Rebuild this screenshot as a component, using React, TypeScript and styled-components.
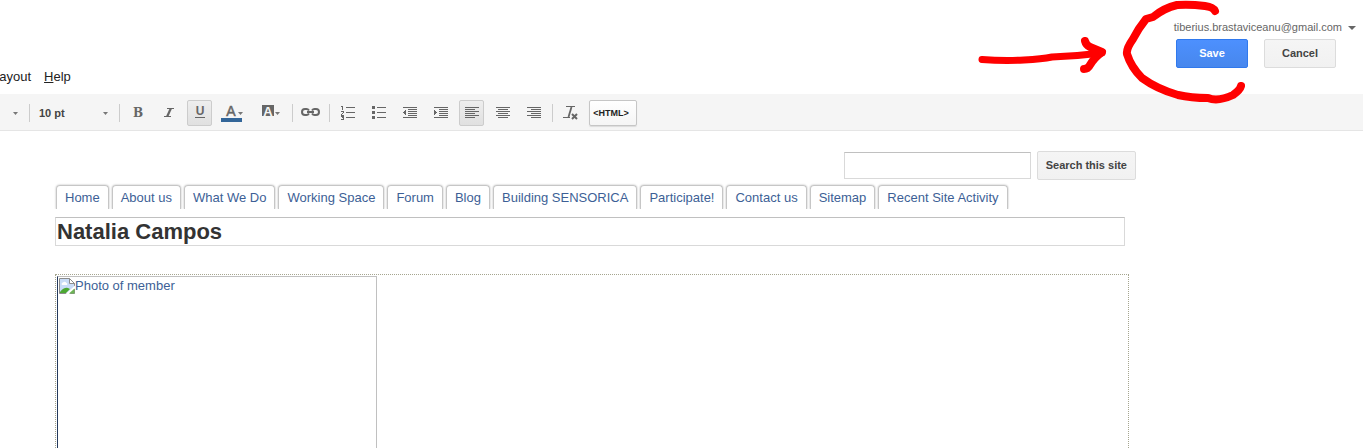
import React from "react";
import styled, { createGlobalStyle, css } from "styled-components";

const GlobalStyle = createGlobalStyle`
  *, *::before, *::after { box-sizing: border-box; }
  body {
    margin: 0;
    background: #fff;
    color: #222;
    font-family: "Liberation Sans", Arial, sans-serif;
    font-size: 13px;
  }
  button, input, select { font-family: inherit; margin: 0; }
`;

const Page = styled.div`
  position: relative;
  display: flex;
  flex-direction: column;
  height: 100vh;
  overflow: hidden;
`;

const Header = styled.header`
  display: flex;
  justify-content: space-between;
  padding-bottom: 8px;
`;

const MenuBar = styled.nav`
  display: flex;
  align-items: flex-end;
  gap: 13px;
  margin-left: -8px;
`;

const MenuItem = styled.a`
  color: #222;
  font-size: 13px;
  line-height: 19px;
  text-decoration: none;
`;

const Account = styled.div`
  display: flex;
  flex-direction: column;
  align-items: flex-end;
  gap: 4px;
  padding: 20px 7px 18px 0;
`;

const AccountButton = styled.button`
  display: flex;
  align-items: center;
  gap: 6px;
  padding: 0;
  border: 0;
  background: none;
  color: #666;
  font-size: 11px;
  line-height: 15px;
`;

const Actions = styled.div`
  display: flex;
  gap: 16px;
  margin-right: 20px;
`;

const ActionButton = styled.button<{ $primary?: boolean }>`
  min-width: 72px;
  height: 29px;
  padding: 0 8px;
  border: 1px solid #dcdcdc;
  border-radius: 2px;
  background: linear-gradient(#f5f5f5, #f1f1f1);
  color: #444;
  font-size: 11px;
  font-weight: bold;
  line-height: 27px;
  white-space: nowrap;
  ${(p) =>
    p.$primary &&
    css`
      border-color: #3079ed;
      background: linear-gradient(#4d90fe, #4787ed);
      color: #fff;
    `}
`;

const Toolbar = styled.div`
  display: flex;
  align-items: center;
  gap: 6px;
  flex: none;
  height: 37px;
  padding-top: 2px;
  border-bottom: 1px solid #e5e5e5;
  background: #f5f5f5;
`;

const Divider = styled.span`
  width: 1px;
  height: 18px;
  margin-right: -1px;
  background: #ccc;
`;

const ToolButton = styled.button<{ $wide?: boolean; $active?: boolean }>`
  display: flex;
  align-items: center;
  justify-content: center;
  width: ${(p) => (p.$wide ? 31 : 25)}px;
  height: 26px;
  padding: 0;
  border: 1px solid ${(p) => (p.$active ? "#ccc" : "transparent")};
  border-radius: 2px;
  background: ${(p) => (p.$active ? "linear-gradient(#eee, #e0e0e0)" : "none")};
  color: #666;
`;

const FontButton = styled.button`
  display: flex;
  align-items: center;
  justify-content: flex-end;
  width: 23px;
  height: 26px;
  padding: 0 5px;
  border: 0;
  background: none;
`;

const SizeField = styled.label`
  display: flex;
  align-items: center;
  width: 78px;
  padding: 0 5px 0 4px;
`;

const SizeSelect = styled.select`
  flex: 1;
  min-width: 0;
  padding: 0;
  border: 0;
  appearance: none;
  background: none;
  color: #444;
  font-size: 11px;
  font-weight: bold;
  line-height: 15px;
`;

const HtmlButton = styled.button`
  width: 48px;
  height: 26px;
  padding: 0 4px 0 0;
  border: 1px solid #c6c6c6;
  border-radius: 2px;
  background: linear-gradient(#fff, #f5f5f5);
  box-shadow: 0 1px 1px rgba(0, 0, 0, 0.1);
  color: #222;
  font-size: 9px;
  font-weight: bold;
`;

const Icon = styled.svg`
  display: block;
  flex: none;
`;

const Site = styled.main`
  display: flex;
  flex-direction: column;
  flex: 1;
  min-height: 0;
  margin: 20px 227px 0 55px;
`;

const Search = styled.form`
  display: flex;
  align-items: center;
  justify-content: flex-end;
  gap: 6px;
`;

const field = css`
  border: 1px solid #d9d9d9;
  border-top-color: #c0c0c0;
  border-radius: 0;
  background: #fff;
  outline: none;
`;

const SearchInput = styled.input`
  ${field}
  width: 187px;
  height: 27px;
  padding: 0 8px;
  font-size: 13px;
`;

const Tabs = styled.nav`
  display: flex;
  gap: 3px;
  margin: 5px 0 0 1px;
`;

const Tab = styled.a`
  height: 24px;
  padding: 0 8px;
  border: solid #c6c6c6;
  border-width: 1px 1px 0;
  border-radius: 4px 4px 0 0;
  box-shadow: 0 0 2px #aaa;
  clip-path: inset(-2px -2px 0);
  color: #3d5f96;
  font-size: 13px;
  line-height: 23px;
  text-decoration: none;
  white-space: nowrap;
`;

const TitleInput = styled.input`
  ${field}
  height: 29px;
  margin: 8px 11px 0 0;
  padding: 0 1px;
  color: #333;
  font-size: 22px;
  font-weight: bold;
`;

const Editor = styled.section`
  flex: 1;
  min-height: 0;
  margin: 28px 7px 0 0;
  padding: 1px;
  border: 1px dotted #a5a58f;
  border-bottom: 0;
  overflow: hidden;
`;

const Photo = styled.a`
  display: flex;
  align-items: flex-start;
  width: 320px;
  height: 240px;
  padding: 1px;
  border: 1px solid #c0c0c0;
  border-left-color: #23395c;
  color: #3d5f96;
  font-size: 13px;
  line-height: 16px;
  text-decoration: none;
`;

const Annotation = styled.svg`
  position: absolute;
  top: 0;
  right: 0;
  pointer-events: none;
`;

const Caret = ({ w = 5, h = 3, fill = "#777" }) => (
  <Icon width={w} height={h} viewBox={`0 0 ${w} ${h}`} aria-hidden="true">
    <path d={`M0 0H${w}L${w / 2} ${h}Z`} fill={fill} />
  </Icon>
);

/* Rows of [x, y, width], each one pixel high. */
const Lines = ({ rows, children }: { rows: number[][]; children?: React.ReactNode }) => (
  <Icon width="17" height="14" viewBox="-2 0 17 14" fill="#666" shapeRendering="crispEdges" aria-hidden="true">
    {rows.map(([x, y, w]) => (
      <rect key={y} x={x} y={y} width={w} height="1" />
    ))}
    {children}
  </Icon>
);

const glyph = { fill: "#666", fontWeight: "bold" as const, textAnchor: "middle" as const };

const listRows = [[5, 1, 9], [5, 6, 9], [5, 11, 9]];
const indentRows = [[0, 1, 14], [5, 3, 9], [5, 5, 9], [5, 7, 9], [5, 9, 9], [0, 11, 14]];
const alignRows = (short: number) => [
  [0, 1, 14], [short, 3, 10], [0, 5, 14], [short, 7, 10], [0, 9, 14], [short, 11, 10],
];

const tabs = [
  "Home", "About us", "What We Do", "Working Space", "Forum", "Blog",
  "Building SENSORICA", "Participate!", "Contact us", "Sitemap", "Recent Site Activity",
];

export default function App() {
  return (
    <Page>
      <GlobalStyle />
      <Header>
        <MenuBar>
          <MenuItem href="#layout">Layout</MenuItem>
          <MenuItem href="#help"><u>H</u>elp</MenuItem>
        </MenuBar>
        <Account>
          <AccountButton>
            tiberius.brastaviceanu@gmail.com
            <Caret w={8} h={4} fill="#666" />
          </AccountButton>
          <Actions>
            <ActionButton $primary>Save</ActionButton>
            <ActionButton>Cancel</ActionButton>
          </Actions>
        </Account>
      </Header>

      <Toolbar role="toolbar" aria-label="Formatting">
        <FontButton aria-label="Font"><Caret /></FontButton>
        <Divider />
        <SizeField>
          <SizeSelect aria-label="Font size" defaultValue="10 pt">
            <option>10 pt</option>
          </SizeSelect>
          <Caret />
        </SizeField>
        <Divider />
        <ToolButton aria-label="Bold">
          <Icon width="15" height="14" viewBox="0 0 15 14">
            <text x="8" y="11" fontFamily="'DejaVu Serif', serif" fontSize="12" {...glyph}>B</text>
          </Icon>
        </ToolButton>
        <ToolButton aria-label="Italic">
          <Icon width="15" height="14" viewBox="0 0 15 14" fill="none" stroke="#666">
            <path d="M6 2.500h7M3 10.500h7" />
            <path d="M9.800 2.500L6.200 10.500" strokeWidth="2.200" />
          </Icon>
        </ToolButton>
        <ToolButton aria-label="Underline" $active>
          <Icon width="15" height="14" viewBox="0 0 15 14">
            <text x="8" y="9" fontFamily="'Liberation Sans', sans-serif" fontSize="12" {...glyph}>U</text>
            <rect x="3" y="11" width="10" height="1" fill="#666" />
          </Icon>
        </ToolButton>
        <ToolButton aria-label="Text color" $wide>
          <Icon width="25" height="18" viewBox="0 0 25 18">
            <text x="10" y="12" fontFamily="'Liberation Sans', sans-serif" fontSize="14" {...glyph} fontWeight="normal" stroke="#666" strokeWidth=".5">A</text>
            <path d="M17 8h5l-2.500 3z" fill="#777" />
            <rect x="0" y="14" width="21" height="4" fill="#336699" />
          </Icon>
        </ToolButton>
        <ToolButton aria-label="Highlight color" $wide>
          <Icon width="21" height="18" viewBox="-2 0 21 18">
            <rect x="0" y="1" width="12" height="11" fill="#666" />
            <text x="6" y="12" fontFamily="'Liberation Sans', sans-serif" fontSize="13" {...glyph} fill="#f5f5f5">A</text>
            <path d="M13 8h5l-2.500 3z" fill="#777" />
          </Icon>
        </ToolButton>
        <Divider />
        <ToolButton aria-label="Link">
          <Icon width="19" height="12" viewBox="0 0 19 12" fill="none" stroke="#666" strokeWidth="2">
            <path d="M8 3.500Q7 2 5.500 2H4a3 3 0 0 0 0 6h1.500Q7 8 8 6.500M11 3.500Q12 2 13.500 2H15a3 3 0 0 1 0 6h-1.500Q12 8 11 6.500M6 5h7" />
          </Icon>
        </ToolButton>
        <Divider />
        <ToolButton aria-label="Numbered list">
          <Lines rows={listRows}>
            <path d="M0 0h2v4h-1v-3h-1zM0 5h3v2h-1v1h-1v1h2v1h-3v-2h1v-1h1v-1h-2zM0 10h3v4h-3v-1h2v-1h-1v-1h-1z" />
          </Lines>
        </ToolButton>
        <ToolButton aria-label="Bulleted list">
          <Lines rows={listRows}>
            <path d="M0 0h3v3h-3zM0 5h3v3h-3zM0 10h3v3h-3z" />
          </Lines>
        </ToolButton>
        <ToolButton aria-label="Decrease indent">
          <Lines rows={indentRows}><path d="M3 4v5h-1v-1h-1v-1h-1v-1h1v-1h1v-1z" /></Lines>
        </ToolButton>
        <ToolButton aria-label="Increase indent">
          <Lines rows={indentRows}><path d="M0 4v5h1v-1h1v-1h1v-1h-1v-1h-1v-1z" /></Lines>
        </ToolButton>
        <ToolButton aria-label="Align left" $active><Lines rows={alignRows(0)} /></ToolButton>
        <ToolButton aria-label="Align center"><Lines rows={alignRows(2)} /></ToolButton>
        <ToolButton aria-label="Align right"><Lines rows={alignRows(4)} /></ToolButton>
        <Divider />
        <ToolButton aria-label="Remove formatting">
          <Icon width="17" height="14" viewBox="-1 0 17 14" fill="none" stroke="#666">
            <path d="M3 .500h9M0 11.500h7" />
            <path d="M8.500 1l-3 10" strokeWidth="1.800" />
            <path d="M9 8l5 5M14 8l-5 5" strokeWidth="2" />
          </Icon>
        </ToolButton>
        <HtmlButton>&lt;HTML&gt;</HtmlButton>
      </Toolbar>

      <Site>
        <Search onSubmit={(e) => e.preventDefault()}>
          <SearchInput type="text" aria-label="Search this site" />
          <ActionButton type="submit">Search this site</ActionButton>
        </Search>
        <Tabs>
          {tabs.map((t) => (
            <Tab key={t} href="#">{t}</Tab>
          ))}
        </Tabs>
        <TitleInput aria-label="Page title" defaultValue="Natalia Campos" />
        <Editor>
          <Photo href="#photo">
            <Icon width="16" height="16" viewBox="0 0 16 16" aria-hidden="true">
              <path d="M.5.500h10l5 5v10H.5z" fill="#c9dcf7" stroke="#8c8c8c" />
              <path d="M10.500.500v5h5z" fill="#fff" stroke="#8c8c8c" />
              <path d="M3 7a1.500 1.500 0 0 1 1-2.500 2 2 0 0 1 3.500.500A1.200 1.200 0 0 1 8 7z" fill="#fff" />
              <path d="M1 15v-1q4-5 8-4l2 1-4 4z" fill="#4ca832" />
              <path d="M6 16.500L16.500 7v3L10 16.500z" fill="#fff" />
              <path d="M10 15.500h5.500v-5z" fill="#6cb454" />
            </Icon>
            Photo of member
          </Photo>
        </Editor>
      </Site>

      <Annotation width="393" height="110" viewBox="970 0 393 110" fill="none" stroke="#f00" strokeWidth="8" strokeLinecap="round" strokeLinejoin="round" aria-hidden="true">
        <path strokeWidth="7" d="M982 59.500Q1003 61 1024 60Q1042 59 1052 57Q1078 56 1102 53" />
        <path d="M1085 41Q1086 45 1090 47L1102 52Q1094 58 1090 65Q1088 69 1084 69" />
        <path d="M1215 11Q1213 7 1205 6Q1190 4 1177 5Q1164 8 1153 17L1146 19Q1138 29 1133 39Q1126 49 1127 54Q1131 67 1142 78Q1157 89 1178 95Q1191 98 1208 98Q1218 102 1233 95Q1240 90 1241 86" />
      </Annotation>
    </Page>
  );
}
